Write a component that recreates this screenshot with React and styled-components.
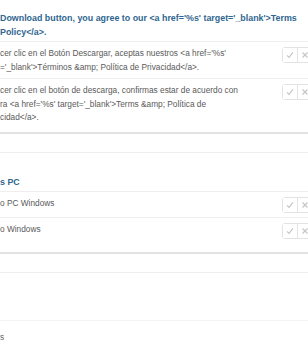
import React from "react";
import styled, {createGlobalStyle} from "styled-components";

const GlobalStyle = createGlobalStyle`
  html, body {
    margin: 0;
    padding: 0;
    background: #ffffff;
    overflow: hidden;
  }
  body {
    font-family: "Liberation Sans", Arial, sans-serif;
  }
`;

const Page = styled.div`
  width: 312px;
  padding-top: 12px;
`;

const Group = styled.section`
  margin-top: ${props => props.first ? "0" : "23px"};
`;

const Heading = styled.h3`
  margin: 0;
  padding-bottom: 2px;
  border-bottom: 1px solid #efefef;
  color: #2f6690;
  font-size: 8.9px;
  line-height: 13.5px;
  font-weight: bold;
  white-space: nowrap;
`;

const Panel = styled.div`
  padding-bottom: ${props => props.gap}px;
  border-bottom: 2px solid #e2e2e2;
`;

const Row = styled.div`
  display: flex;
  align-items: flex-start;
  justify-content: space-between;
  padding: 5px 0 4px;
  border-bottom: ${props => props.last ? "none" : "1px solid #efefef"};
`;

const Text = styled.div`
  color: #5a5a5a;
  font-size: 8.3px;
  line-height: 13.5px;
  white-space: nowrap;
`;

const Actions = styled.div`
  display: flex;
  flex-shrink: 0;
  border: 1px solid #e3e3e3;
  border-radius: 3px;
`;

const ActionButton = styled.button`
  display: flex;
  align-items: center;
  justify-content: center;
  width: 14px;
  height: 14px;
  padding: 0;
  background: #ffffff;
  border: none;
  border-left: ${props => props.divided ? "1px solid #e3e3e3" : "none"};
  color: #c4c4c4;
`;

const Footer = styled.div`
  height: 18px;
  border-bottom: 1px solid #efefef;
`;

const Blank = styled.div`
  height: 47px;
  border-bottom: 1px solid #f4f4f4;
`;

const Tail = styled.div`
  padding-top: 10px;
  color: #666666;
  font-size: 8.3px;
  line-height: 13.5px;
`;

const CheckIcon = () => (
  <svg width="8" height="8" viewBox="0 0 8 8" fill="none" stroke="currentColor" strokeWidth="1.1">
    <path d="M1 4.4 L3 6.4 L7 1.4"/>
  </svg>
);

const CrossIcon = () => (
  <svg width="8" height="8" viewBox="0 0 8 8" fill="none" stroke="currentColor" strokeWidth="1.1">
    <path d="M1.5 1.5 L6.5 6.5 M6.5 1.5 L1.5 6.5"/>
  </svg>
);

const groups = [
  {
    heading: ["Download button, you agree to our <a href='%s' target='_blank'>Terms", "Policy</a>."],
    gap: 3,
    rows: [
      ["cer clic en el Botón Descargar, aceptas nuestros <a href='%s'", "='_blank'>Términos &amp; Política de Privacidad</a>."],
      ["cer clic en el botón de descarga, confirmas estar de acuerdo con", "ra <a href='%s' target='_blank'>Terms &amp; Política de", "cidad</a>."]
    ]
  },
  {
    heading: ["s PC"],
    gap: 9,
    rows: [
      ["o PC Windows"],
      ["o Windows"]
    ]
  }
];

const Lines = ({lines}) => lines.map((line, i) => (
  <React.Fragment key={i}>
    {i > 0 && <br/>}
    {line}
  </React.Fragment>
));

export default function App() {
  return (
    <Page>
      <GlobalStyle/>
      {groups.map((group, g) => (
        <Group key={g} first={g === 0}>
          <Heading><Lines lines={group.heading}/></Heading>
          <Panel gap={group.gap}>
            {group.rows.map((row, r) => (
              <Row key={r} last={r === group.rows.length - 1}>
                <Text><Lines lines={row}/></Text>
                <Actions>
                  <ActionButton><CheckIcon/></ActionButton>
                  <ActionButton divided><CrossIcon/></ActionButton>
                </Actions>
              </Row>
            ))}
          </Panel>
          <Footer/>
        </Group>
      ))}
      <Blank/>
      <Tail>s</Tail>
    </Page>
  );
}
